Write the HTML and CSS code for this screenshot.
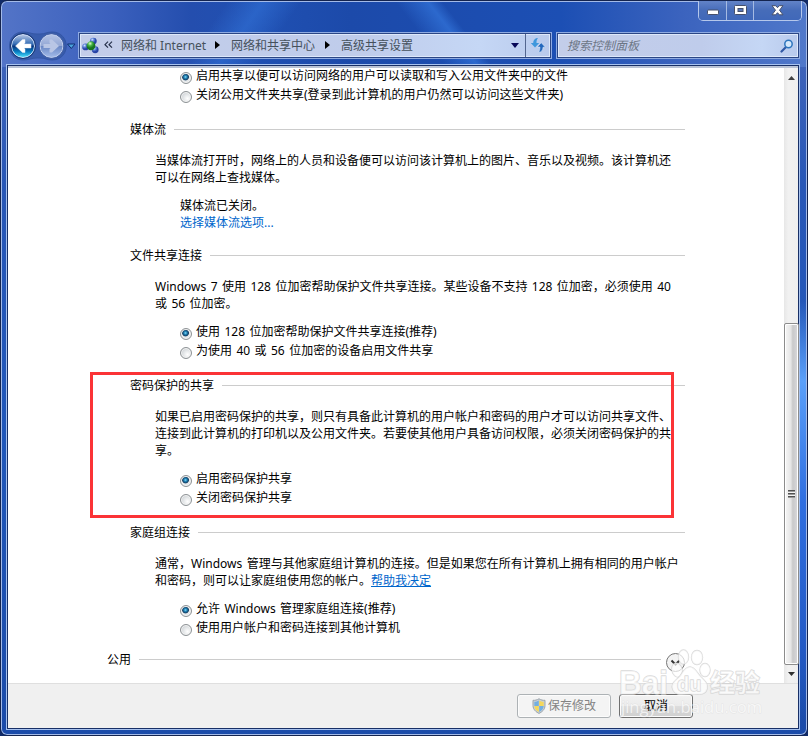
FILE: index.html
```html
<!DOCTYPE html>
<html lang="zh-CN">
<head>
<meta charset="utf-8">
<title>高级共享设置</title>
<link rel="stylesheet" href="styles.css">
</head>
<body>
<div class="window">
  <div class="captions">
    <button class="cap min"><svg width="14" height="7"><rect x="1.5" y="1" width="11" height="4.5" rx="1" fill="#fff" stroke="#46506c"/></svg></button>
    <button class="cap max"><svg width="13" height="11"><rect x=".5" y=".5" width="12" height="9" rx="1" fill="#fff" stroke="#46506c"/><rect x="4" y="3.5" width="5" height="3" fill="#5877ba" stroke="#46506c"/></svg></button>
    <button class="cap close"><svg width="13" height="11"><path d="M1 .7h3.7l1.8 2 1.8-2H12L8.5 5.200 12 9.800H8.300L6.500 7.700 4.700 9.800H1L4.500 5.200z" fill="#fff" stroke="#46506c"/></svg></button>
  </div>
  <header class="nav">
    <svg class="travel" width="70" height="30" viewBox="0 0 70 30">
      <defs>
        <linearGradient id="back" x1="0" y1="0" x2="0" y2="1"><stop offset="0" stop-color="#b8c8e5"/><stop offset=".4" stop-color="#3970b7"/><stop offset=".52" stop-color="#073781"/><stop offset=".75" stop-color="#087fc3"/><stop offset="1" stop-color="#51e5ff"/></linearGradient>
        <linearGradient id="fwd" x1="0" y1="0" x2="0" y2="1"><stop offset="0" stop-color="#b5c4e6"/><stop offset=".48" stop-color="#94a8d5"/><stop offset=".52" stop-color="#6b88c5"/><stop offset="1" stop-color="#a5bdea"/></linearGradient>
      </defs>
      <path d="M14 1C20 1 22 3 28 3h3C36 3 38 1 43 1c19 0 19 28 0 28-5 0-7-2-12-2h-3c-6 0-8 2-14 2C-4 29-4 1 14 1z" fill="#3156a4" stroke="#2b4d99" opacity=".7"/>
      <circle cx="14" cy="15" r="11.500" fill="url(#back)" stroke="#d7e5fb"/>
      <circle cx="14" cy="15" r="12.500" fill="none" stroke="#18366f"/>
      <path d="M6.500 15l7-6.500h2.500v3.500l-1 1h7v4h-7l1 1v3.500h-2.500z" fill="#fff" stroke="#e5effb" stroke-width=".5"/>
      <circle cx="42.500" cy="15" r="11.500" fill="url(#fwd)" stroke="#c5d2ef"/>
      <circle cx="42.500" cy="15" r="12.500" fill="none" stroke="#4662a4"/>
      <path d="M50 15l-7-6.500h-2.500v3.500l1 1h-7v4h7l-1 1v3.500H43z" fill="#b9c6e5"/>
      <path d="M58.500 13h7.500l-3.700 4.500z" fill="#4ba2dc" stroke="#102f73"/>
    </svg>
    <div class="address">
      <svg class="neticon" width="17" height="17" viewBox="0 0 18 17">
        <defs>
          <radialGradient id="bb" cx=".35" cy=".3"><stop offset="0" stop-color="#d4e2ff"/><stop offset=".5" stop-color="#5c82d8"/><stop offset="1" stop-color="#2743a5"/></radialGradient>
          <radialGradient id="gb" cx=".4" cy=".25"><stop offset="0" stop-color="#e2ffcb"/><stop offset=".5" stop-color="#45b345"/><stop offset="1" stop-color="#187520"/></radialGradient>
        </defs>
        <path d="M10 3v6L4 9.500M10 9l4 4" stroke="#7c93bc" stroke-width="2" fill="none"/>
        <circle cx="12" cy="3.800" r="3.600" fill="url(#bb)"/><circle cx="3.800" cy="10" r="3.600" fill="url(#bb)"/><circle cx="14" cy="13" r="3.600" fill="url(#bb)"/><circle cx="9.500" cy="8.800" r="4.700" fill="url(#gb)"/>
      </svg>
      <svg class="more" width="9" height="8" viewBox="0 0 9 8"><path d="M4 .7L1 3.700l3 3M8 .7L5 3.700l3 3" fill="none" stroke="#25304a" stroke-width="1.200"/></svg>
      <span class="c1">网络和 Internet</span><i class="arrow"></i>
      <span class="c2">网络和共享中心</span><i class="arrow"></i>
      <span class="c3">高级共享设置</span>
      <i class="drop"></i>
      <span class="refresh"><svg width="16" height="16" viewBox="0 0 16 16"><path d="M8 1C5 1 3.200 3 3.200 6H.8l4.200 4.500L9.200 6H6.500C6.500 4 6.700 2.600 8 1z" fill="#3f97dc"/><path d="M8.500 15.200c3 0 4.500-2 4.500-5h2.400L11.200 5.700 7.300 10h2.600c0 2-.2 3.500-1.400 5.200z" fill="#2468bd" stroke="#eaf4ff" stroke-width=".5"/></svg></span>
    </div>
    <div class="search"><span>搜索控制面板</span><svg width="14" height="14" viewBox="0 0 14 14"><path d="M6 8L1.500 12.500" stroke="#3159a5" stroke-width="2.200" stroke-linecap="round"/><circle cx="8.500" cy="5" r="3.700" fill="#d5e8fb" stroke="#2d75bd" stroke-width="1.500"/></svg></div>
  </header>
  <main class="client">
    <div class="view">
      <div class="page">
        <div class="radios">
          <label class="radio on"><i></i>启用共享以便可以访问网络的用户可以读取和写入公用文件夹中的文件</label>
          <label class="radio"><i></i>关闭公用文件夹共享(登录到此计算机的用户仍然可以访问这些文件夹)</label>
        </div>
        <section>
          <h2>媒体流</h2>
          <p>当媒体流打开时，网络上的人员和设备便可以访问该计算机上的图片、音乐以及视频。该计算机还<br>可以在网络上查找媒体。</p>
          <div class="status">媒体流已关闭。<br><a>选择媒体流选项...</a></div>
        </section>
        <section>
          <h2>文件共享连接</h2>
          <p>Windows 7 使用 128 位加密帮助保护文件共享连接。某些设备不支持 128 位加密，必须使用 40<br>或 56 位加密。</p>
          <div class="radios">
            <label class="radio on"><i></i>使用 128 位加密帮助保护文件共享连接(推荐)</label>
            <label class="radio"><i></i>为使用 40 或 56 位加密的设备启用文件共享</label>
          </div>
        </section>
        <section>
          <h2>密码保护的共享</h2>
          <p>如果已启用密码保护的共享，则只有具备此计算机的用户帐户和密码的用户才可以访问共享文件、<br>连接到此计算机的打印机以及公用文件夹。若要使其他用户具备访问权限，必须关闭密码保护的共<br>享。</p>
          <div class="radios">
            <label class="radio on"><i></i>启用密码保护共享</label>
            <label class="radio"><i></i>关闭密码保护共享</label>
          </div>
          <div class="highlight"></div>
        </section>
        <section>
          <h2>家庭组连接</h2>
          <p>通常，Windows 管理与其他家庭组计算机的连接。但是如果您在所有计算机上拥有相同的用户帐户<br>和密码，则可以让家庭组使用您的帐户。<a class="help">帮助我决定</a></p>
          <div class="radios">
            <label class="radio on"><i></i>允许 Windows 管理家庭组连接(推荐)</label>
            <label class="radio"><i></i>使用用户帐户和密码连接到其他计算机</label>
          </div>
        </section>
        <h2 class="profile">公用</h2>
      </div>
      <div class="scrollbar">
        <svg class="up" width="7" height="4"><path d="M0 4L3.500 0 7 4z" fill="#404040"/></svg>
        <div class="thumb"><i></i></div>
        <svg class="down" width="7" height="4"><path d="M0 0h7L3.500 4z" fill="#303030"/></svg>
      </div>
    </div>
    <footer class="actions">
      <button class="btn save"><svg width="14" height="16" viewBox="0 0 14 16"><path d="M7 .8C9 2 11 2.500 13 2.300v5.200c0 4-3 6.500-6 7.900-3-1.400-6-3.900-6-7.900V2.300C3 2.500 5 2 7 .8z" fill="#cbd2d8" stroke="#9ba4ab"/><path d="M6.800 2.500V8H2.300V3.800C4 3.800 5.500 3.300 6.800 2.500zM7.200 8h4.500c-.2 3-2.200 4.800-4.500 6z" fill="#73aee0"/><path d="M7.200 2.500V8h4.500V3.800c-1.700 0-3.200-.5-4.500-1.300zM6.800 8H2.300c.2 3 2.200 4.800 4.500 6z" fill="#f4d75b"/></svg>保存修改</button>
      <button class="btn cancel">取消</button>
    </footer>
  </main>
  <svg class="overlay" width="150" height="90" viewBox="615 642 150 90">
    <circle cx="675.500" cy="662.500" r="9" fill="#f3f3f3" stroke="#777"/>
    <path d="M671.500 660.500l4 4 4-4" fill="none" stroke="#333" stroke-width="2"/>
    <g class="mark">
      <ellipse cx="683.500" cy="657" rx="5" ry="7"/><ellipse cx="697" cy="657.500" rx="5.500" ry="7"/><ellipse cx="705" cy="670" rx="5" ry="6.500"/><ellipse cx="677" cy="670" rx="5" ry="7" transform="rotate(-15 677 670)"/>
      <path d="M690 667c5 0 7 6 11 10 5 5 7 7 6 12-2 7-9 5-17 5s-14 2-17-4c-3-7 3-9 7-14 3-4 5-9 10-9z"/>
      <text x="619" y="694" class="logo" textLength="49" lengthAdjust="spacingAndGlyphs">Bai</text>
      <text x="677" y="691" class="du">du</text>
      <text x="710" y="692" class="jing">经验</text>
      <text x="621" y="713" class="url" textLength="141" lengthAdjust="spacingAndGlyphs">jingyan.baidu.com</text>
    </g>
  </svg>
</div>
</body>
</html>
```
FILE: styles.css
```css
* { box-sizing: border-box; }
body {
  margin: 0;
  background: #102a68;
  font: 12px/17px "Noto Sans", "Noto Sans CJK SC", sans-serif;
  color: #000;
}
.window {
  position: relative;
  width: 808px;
  height: 736px;
  padding: 31px 6px 5px 5px;
  border: 1px solid #14244f;
  border-radius: 7px;
  box-shadow: inset 0 0 0 1px #a3bae8;
  background:
    linear-gradient(180deg, transparent 300px, #5ba0fa 380px, #2f6ee0 500px, #2359c4 650px, transparent 720px) right / 9px 100% no-repeat,
    linear-gradient(52deg, transparent 54%, rgba(53, 120, 222, .65) 63%, transparent 67%) 250px 0 / 310px 66px no-repeat,
    linear-gradient(125deg, transparent 35%, rgba(53, 120, 222, .5) 48%, transparent 62%) 130px 0 / 230px 66px no-repeat,
    linear-gradient(90deg, #5374c7 0, #3b60bd 110px, #244eae 190px, #2050b2 260px, #1c4aaa 350px, #1c4fb4 560px, #3b63be 680px, #5078ca 100%) top / 100% 66px no-repeat,
    linear-gradient(180deg, #4969bb, #2857b7 25%, #2057ba 60%, #1b4ba9);
}
.captions {
  position: absolute;
  top: 0;
  right: 5px;
  display: flex;
  width: 104px;
  height: 20px;
  border: 1px solid #b5c7eb;
  border-top: 0;
  border-radius: 0 0 5px 5px;
  overflow: hidden;
}
.cap {
  display: flex;
  align-items: center;
  justify-content: center;
  padding: 0;
  border: 0;
  border-right: 1px solid #a6bbe3;
  background: linear-gradient(#6283c8, #466cb9 50%, #4068b9);
}
.cap.min { width: 28px; padding-top: 4px; }
.cap.max { width: 27px; }
.cap.close { width: 47px; border: 0; }
.nav { display: flex; height: 31px; padding-left: 3px; }
.travel { flex: none; margin-top: -1px; }
.address, .search {
  display: flex;
  align-items: center;
  height: 25px;
  margin-top: 1px;
  border: 1px solid #2b4685;
  box-shadow: 0 0 0 1px #8fabe2, inset 0 0 0 1px #dde8fa;
  background: linear-gradient(90deg, #c3cde9, #bfcceb 60%, #c5d7f5 85%, #b9caec);
  color: #45515c;
}
.address { width: 472px; padding: 0 0 1px 2px; white-space: nowrap; }
.neticon { flex: none; margin-right: 5px; }
.more { flex: none; margin-right: 8px; }
.c1, .c2 { width: 94px; }
.c3 { width: 170px; }
.arrow { margin-right: 11px; border: 4px solid transparent; border-left: 5px solid #000; border-right: 0; }
.drop { border: 4px solid transparent; border-top: 5px solid #080858; border-bottom: 0; }
.refresh {
  display: flex;
  flex: none;
  align-items: center;
  height: 23px;
  margin-left: auto;
  padding: 0 4px;
  border-left: 1px solid #53668f;
}
.search { width: 242px; margin-left: 6px; padding: 0 4px 0 9px; justify-content: space-between; color: #6c7685; font-style: italic; }
.client {
  width: 794px;
  height: 666px;
  margin-top: 1px;
  border: 1px solid #a7c2ef;
  padding: 1px;
  background: #182f66;
}
.view { display: flex; height: 617px; background: #fff; border-top: 2px solid #b9c3d6; }
.page { width: 777px; margin-top: -2px; padding-right: 99px; white-space: nowrap; word-spacing: 1.3px; }
.radios { padding-left: 172px; }
.radio { display: flex; height: 19px; align-items: center; }
.radio i {
  width: 12px;
  height: 12px;
  margin: 4px 4px 0 0;
  border: 1px solid #8d9295;
  border-radius: 50%;
  background: radial-gradient(circle at 65% 65%, #fff, #e2e5e7 45%, #bec3c8);
  box-shadow: inset 0 0 0 1px #f4f4f4;
}
.radio.on i { background: radial-gradient(circle at 45% 40%, #8bdcf7 0, #1f83b6 1.500px, #143e63 3px, #e5e8ea 3.800px); }
section { position: relative; margin-top: 17px; }
section:nth-of-type(2) { margin-top: 16px; }
h2 { display: flex; align-items: center; margin: 0 0 14px; padding-left: 122px; font: inherit; }
h2::after { content: ""; flex: 1; height: 1px; margin-left: 8px; background: #ccc; }
p { margin: 0 0 10px; padding-left: 147px; }
.status { padding-left: 172px; margin-top: 11px; }
a { color: #06c; }
.help { text-decoration: underline; }
.highlight { position: absolute; left: 82px; top: -5px; width: 584px; height: 146px; border: 3px solid #fb3336; }
.profile { margin: 14px 24px 0 0; padding-left: 99px; }
.scrollbar {
  display: flex;
  flex-direction: column;
  align-items: center;
  width: 14px;
  padding: 8px 0 7px;
  background: linear-gradient(90deg, #e7e7e7, #f1f1f1 30%, #efefef);
}
.up, .down { flex: none; }
.thumb {
  display: flex;
  align-items: center;
  justify-content: center;
  width: 15px;
  height: 342px;
  margin: auto 0 7px;
  border: 1px solid #8c8c8c;
  border-radius: 2px;
  box-shadow: inset 0 0 0 1px #fff;
  background: linear-gradient(90deg, #f6f6f6, #e5e5e5 45%, #c9c9ca 60%, #d9d9dc);
}
.thumb i { width: 7px; height: 8px; background: repeating-linear-gradient(#505050 0 1px, #999 1px 2px, #f4f4f4 2px 3px); }
.actions {
  display: flex;
  gap: 8px;
  justify-content: flex-end;
  height: 45px;
  padding: 10px 105px 0 0;
  border-top: 1px solid #dfdfdf;
  background: #f0f0f0;
}
.btn {
  display: flex;
  align-items: center;
  justify-content: center;
  gap: 2px;
  height: 24px;
  padding: 0 0 1px;
  border: 1px solid #707070;
  border-radius: 3px;
  box-shadow: inset 0 0 0 1px #fcfcfc;
  background: linear-gradient(#f2f2f2, #ebebeb 50%, #ddd 50%, #cfcfcf);
  font: inherit;
  color: #000;
}
.save { width: 94px; border-color: #adb2b5; background: #f4f4f4; color: #838383; }
.cancel { width: 74px; }
.overlay { position: absolute; left: 614px; top: 641px; }
.mark { fill: #fff; fill-opacity: .7; stroke: #cfcfcf; stroke-opacity: .8; stroke-width: 1.4; stroke-linejoin: round; paint-order: stroke; }
.logo { font: bold 33px "Liberation Sans", sans-serif; }
.du { font: bold 20px "Liberation Sans", sans-serif; }
.jing { font: bold 25px "Noto Sans CJK SC", sans-serif; }
.url { font: 17px "Open Sans", sans-serif; stroke-width: 1; stroke-opacity: .35; }
```
